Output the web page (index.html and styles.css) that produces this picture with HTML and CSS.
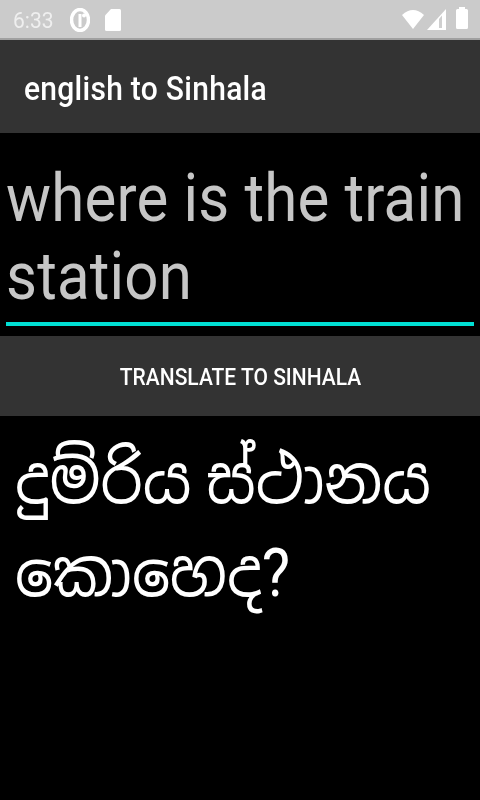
FILE: index.html
```html
<!DOCTYPE html>
<html lang="en">
<head>
<meta charset="utf-8">
<title>english to Sinhala</title>
<link rel="stylesheet" href="styles.css">
</head>
<body>
<div class="app">
<div class="status">
  <div class="status-left">
    <span class="time">6:33</span>
    <svg width="20" height="24" viewBox="0 0 20 24"><ellipse cx="10" cy="12" rx="8.500" ry="10.500" fill="none" stroke="#fff" stroke-width="3.500"/><rect x="8.500" y="6" width="3" height="13" fill="#fff"/><circle cx="14" cy="7.500" r="2" fill="#fff"/></svg>
    <svg width="16" height="22" viewBox="0 0 16 22"><path d="M6 0h8.500a1.500 1.500 0 0 1 1.500 1.500v19a1.500 1.500 0 0 1-1.500 1.500h-13a1.500 1.500 0 0 1-1.500-1.500V6.500z" fill="#fff"/></svg>
  </div>
  <div class="status-right">
    <svg class="wifi" width="22" height="20" viewBox="0 0 22 20"><path d="M0 6Q11-4 22 6L11 20z" fill="#fff"/></svg>
    <svg class="signal" width="19" height="21" viewBox="0 0 19 21"><path d="M0 21L19 0V21z" fill="#fff"/><path d="M12 10V19H15V6.500z" fill="#cfcfcf"/></svg>
    <svg class="battery" width="12" height="22" viewBox="0 0 12 22"><path d="M3 2V0H9V2H10.500a1.500 1.500 0 0 1 1.500 1.500V20.500a1.500 1.500 0 0 1-1.500 1.500H1.500a1.500 1.500 0 0 1-1.500-1.500V3.500a1.500 1.500 0 0 1 1.500-1.500z" fill="#fff"/></svg>
  </div>
</div>
<header class="appbar"><span class="title">english to Sinhala</span></header>
<main class="content">
  <div class="input-wrap">
    <div class="input-text">where is the train station</div>
    <div class="underline"></div>
  </div>
  <button class="btn"><span class="btn-label">TRANSLATE TO SINHALA</span></button>
  <div class="result-wrap"><div class="result">දුම්රිය ස්ථානය කොහෙද?</div></div>
</main>
</div>
</body>
</html>
```

FILE: styles.css
```css
* { box-sizing: border-box; }
html, body { margin: 0; padding: 0; background: #000; }
body {
  width: 480px;
  height: 800px;
  font-family: Roboto, "Noto Sans Sinhala", "Noto Sans", sans-serif;
  overflow: hidden;
}
.app { height: 800px; background: #000; filter: blur(0.6px); }
.status {
  height: 40px;
  background: #cbcbcb;
  border-bottom: 2px solid #a0a0a0;
  display: flex;
  justify-content: space-between;
  align-items: center;
  padding: 2px 12px 0 13px;
}
.status-left, .status-right { display: flex; align-items: center; }
.status-left { gap: 15px; }
.time {
  color: #efefef;
  font-size: 21px;
  width: 42px;
  transform: scaleY(1.08);
}
.wifi { margin: 0 3px 2px 0; }
.signal { margin: 0 10px 1px 0; }
.battery { margin-bottom: 5px; }
.appbar {
  height: 93px;
  background: #333;
  color: #fff;
  font-size: 30px;
  font-weight: 500;
  letter-spacing: 0.28px;
  display: flex;
  align-items: center;
  padding: 4px 0 0 24px;
}
.title { display: inline-block; transform: scaleY(1.1); }
.content { display: flex; flex-direction: column; }
.input-wrap { padding: 27px 6px 0; height: 203px; }
.input-text {
  color: #c6c6c6;
  font-size: 60px;
  letter-spacing: 0.17px;
  line-height: 70px;
  height: 162px;
  transform: scaleY(1.115);
  transform-origin: top;
}
.underline { height: 4px; background: #00e0d4; }
.btn {
  height: 80px;
  padding: 2px 0 0 1px;
  border: 0;
  background: #333;
  color: #fff;
  font: 500 21px Roboto, sans-serif;
  width: 100%;
}
.btn-label { display: inline-block; transform: scaleY(1.12); }
.result-wrap { padding: 19px 14px 0 15px; }
.result {
  color: #fff;
  font-size: 60px;
  line-height: 83.600px;
  transform: scaleY(1.1);
  transform-origin: top;
}
```
